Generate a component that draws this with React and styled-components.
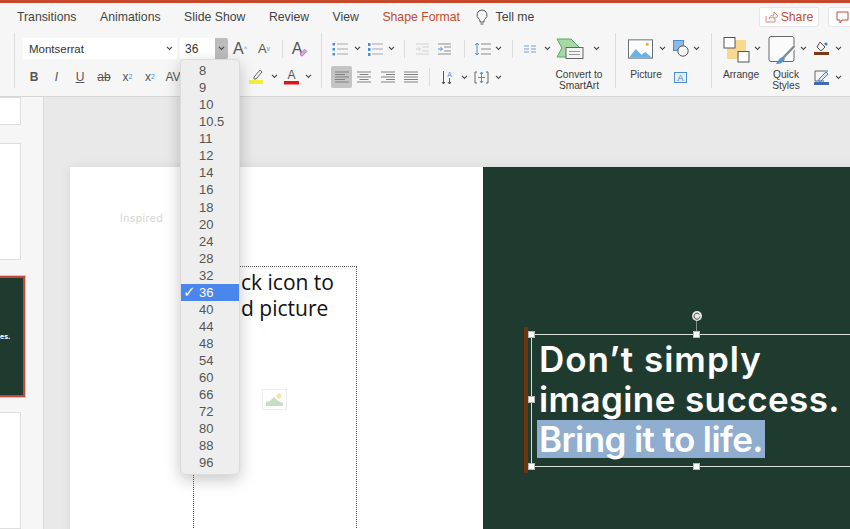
import styled, { createGlobalStyle } from "styled-components";

const GlobalStyle = createGlobalStyle`
	html, body {
		margin: 0;
		padding: 0;
		background: #f5f5f5;
		font-family: "Liberation Sans", Arial, sans-serif;
	}
`;

const Page = styled.div`
	position: relative;
	display: flex;
	flex-direction: column;
	width: 850px;
	height: 529px;
	overflow: hidden;
`;

const TopStripe = styled.div`
	flex: none;
	height: 3px;
	background: #c6492c;
`;

const TabBar = styled.div`
	flex: none;
	display: flex;
	align-items: center;
	gap: 23.5px;
	height: 30px;
	padding: 0 0 2px 17px;
	box-sizing: border-box;
	background: #f6f6f6;
`;

const Tab = styled.span`
	font-size: 12.25px;
	color: ${(p) => (p.$active ? "#c8492f" : "#444")};
	white-space: nowrap;
`;

const TellMe = styled.span`
	display: flex;
	align-items: center;
	gap: 8px;
	margin-left: -8px;
	font-size: 12.25px;
	color: #444;
`;

const TabActions = styled.div`
	display: flex;
	gap: 9px;
	margin-left: auto;
	margin-right: -6px;
`;

const ShareButton = styled.button`
	display: flex;
	align-items: center;
	justify-content: center;
	gap: 3px;
	width: 60px;
	height: 20px;
	padding: 0;
	border: 1px solid #e6e6e6;
	border-radius: 2px;
	background: #fff;
	font: 12.25px "Liberation Sans", Arial, sans-serif;
	color: #c8492f;
`;

const CommentButton = styled(ShareButton)`
	width: 28px;
`;

const Ribbon = styled.div`
	flex: none;
	display: flex;
	height: 64px;
	background: #f6f6f6;
	border-bottom: 1px solid #d6d6d6;
	box-sizing: border-box;
`;

const Group = styled.div`
	flex: none;
	display: flex;
	flex-direction: column;
	gap: 7px;
	width: ${(p) => p.$w}px;
	height: 55px;
	padding: 5px 0 0 ${(p) => p.$pad || 0}px;
	box-sizing: border-box;
	border-right: ${(p) => (p.$last ? "none" : "1px solid #dcdcdc")};
`;

const Row = styled.div`
	display: flex;
	align-items: center;
	height: ${(p) => p.$h || 21}px;
`;

const Slot = styled.div`
	flex: none;
	display: flex;
	align-items: center;
	justify-content: center;
	width: ${(p) => p.$w}px;
	height: 100%;
	background: ${(p) => (p.$active ? "#c4c4c4" : "transparent")};
	border-radius: 2px;
	color: #555;
	font-size: ${(p) => p.$size || 12}px;
`;

const Caret = styled.sup`
	font-size: 7px;
	color: ${(p) => p.$color || "#4a90d9"};
`;

const Rule = styled.div`
	width: 1px;
	height: 18px;
	background: #dcdcdc;
`;

const FontSelect = styled.div`
	flex: none;
	display: flex;
	align-items: center;
	justify-content: space-between;
	width: 154px;
	height: 100%;
	padding: 0 4px 0 6px;
	box-sizing: border-box;
	margin-right: 3px;
	background: #fff;
	font-size: 11.5px;
	color: #333;
`;

const SizeInput = styled.div`
	flex: none;
	display: flex;
	align-items: center;
	width: 35px;
	height: 100%;
	padding-left: 5px;
	box-sizing: border-box;
	background: #fff;
	font-size: 12px;
	color: #333;
`;

const SizeArrow = styled.div`
	flex: none;
	display: flex;
	align-items: center;
	justify-content: center;
	width: 13px;
	height: 100%;
	background: #bcbcbc;
	border-radius: 0 2px 2px 0;
`;

const Label = styled.div`
	flex: none;
	align-self: flex-start;
	width: ${(p) => p.$w}px;
	margin-top: 2.5px;
	font-size: 10.2px;
	line-height: 11px;
	text-align: center;
	color: #3c3c3c;
`;

const Workspace = styled.div`
	flex: 1;
	display: flex;
	min-height: 0;
`;

const ThumbPanel = styled.div`
	flex: none;
	display: flex;
	flex-direction: column;
	width: 44px;
	box-sizing: border-box;
	background: #f6f6f6;
	border-right: 1px solid #dcdcdc;
	overflow: hidden;
`;

const Thumb = styled.div`
	flex: none;
	width: 21px;
	height: ${(p) => p.$h}px;
	margin-bottom: 18px;
	background: #fff;
	border: 1px solid #dedede;
	border-left: none;
	box-sizing: border-box;
`;

const ActiveThumb = styled.div`
	flex: none;
	display: flex;
	align-items: center;
	width: 25px;
	height: 121px;
	margin-top: -2px;
	margin-bottom: 15px;
	box-sizing: border-box;
	background: #1f3b30;
	border: 2px solid #c1483a;
	border-left: none;
	outline: 1px solid #e3c1b8;
	font: 700 7px "Inter", sans-serif;
	color: #fff;
`;

const Canvas = styled.div`
	flex: 1;
	padding: 70px 0 0 26px;
	background: #e9e9e9;
	min-width: 0;
`;

const Slide = styled.div`
	display: flex;
	width: 900px;
	height: 500px;
	box-shadow: 0 0 10px rgba(0, 0, 0, 0.08);
`;

const SlideLeft = styled.div`
	position: relative;
	flex: none;
	width: 413px;
	background: #fff;
`;

const SlideRight = styled.div`
	position: relative;
	flex: 1;
	background: #1f3b30;
`;

const Brand = styled.div`
	position: absolute;
	left: 50px;
	top: 45px;
	font: 400 10.5px "Inter", sans-serif;
	letter-spacing: 0.4px;
	color: #d4d4d4;
`;

const Placeholder = styled.div`
	position: absolute;
	left: 123px;
	top: 99px;
	width: 164px;
	height: 400px;
	padding: 2px 0 0 47px;
	box-sizing: border-box;
	border: 1px dotted #555;
	font: 21px/26px "Open Sans", sans-serif;
	color: #111;
`;

const PictureHint = styled.div`
	position: absolute;
	left: 192px;
	top: 222px;
	display: flex;
	align-items: center;
	justify-content: center;
	width: 25px;
	height: 21px;
	box-sizing: border-box;
	border: 1px solid #ececec;
`;

const AccentBar = styled.div`
	position: absolute;
	left: 41px;
	top: 160px;
	width: 4px;
	height: 146px;
	background: #6f3510;
`;

const TextFrame = styled.div`
	position: absolute;
	left: 48px;
	top: 167px;
	width: 500px;
	height: 133px;
	padding: 4px 0 0 7px;
	box-sizing: border-box;
	border: 1.5px solid #d9dfdc;
	font: 600 35px/40px "Inter", sans-serif;
	color: #fff;
	white-space: nowrap;
`;

const Line = styled.div`
	letter-spacing: ${(p) => p.$ls}px;
`;

const Selected = styled.span`
	display: inline-block;
	margin: -1px 0 0 -2px;
	padding: 0 2px 0 2px;
	height: 38px;
	line-height: 38px;
	background: #8fadcf;
`;

const Handle = styled.div`
	position: absolute;
	left: ${(p) => p.$x}px;
	top: ${(p) => p.$y}px;
	width: 7px;
	height: 7px;
	background: #fff;
	border: 1px solid #bbb;
	box-sizing: border-box;
`;

const RotateStem = styled.div`
	position: absolute;
	left: 213px;
	top: 150px;
	width: 1px;
	height: 17px;
	background: #7f918a;
`;

const RotateHandle = styled.div`
	position: absolute;
	left: 209px;
	top: 144px;
	display: flex;
	align-items: center;
	justify-content: center;
	width: 10px;
	height: 10px;
	border-radius: 50%;
	background: #e8e8e8;
`;

const SizeMenu = styled.ul`
	position: absolute;
	left: 180px;
	top: 59px;
	width: 60px;
	height: 416px;
	margin: 0;
	padding: 2px 0 0;
	box-sizing: border-box;
	list-style: none;
	background: #eeeeee;
	border: 1px solid #dcdcdc;
	border-radius: 4px 4px 6px 6px;
	box-shadow: 0 5px 16px rgba(0, 0, 0, 0.22);
`;

const SizeItem = styled.li`
	position: relative;
	height: 17.07px;
	padding-left: 18px;
	font-size: 13px;
	line-height: 17px;
	color: ${(p) => (p.$selected ? "#fff" : "#555")};
	background: ${(p) => (p.$selected ? "#4a86ec" : "transparent")};
`;

const Check = styled.span`
	position: absolute;
	left: 2px;
	top: 0;
	font-size: 15px;
	font-family: "DejaVu Sans", sans-serif;
`;

const SIZES = [
	"8", "9", "10", "10.5", "11", "12", "14", "16", "18", "20", "24", "28",
	"32", "36", "40", "44", "48", "54", "60", "66", "72", "80", "88", "96",
];

function Chevron() {
	return (
		<svg width="7" height="5" viewBox="0 0 8 6">
			<polyline points="1,1 4,4 7,1" fill="none" stroke="#4a4a4a" strokeWidth="1.4" />
		</svg>
	);
}

function ListLines({ dots, color = "#a8a8a8" }) {
	return (
		<svg width="16" height="14" viewBox="0 0 16 14">
			{[2, 7, 12].map((y) => (
				<g key={y}>
					<rect x={dots === "num" ? 1 : 0.5} y={y - 1} width="2.5" height={dots === "num" ? 3 : 2.5} fill="#4a90d9" />
					<line x1="5" y1={y} x2="16" y2={y} stroke={color} strokeWidth="1" />
				</g>
			))}
		</svg>
	);
}

function IndentIcon({ active }) {
	return (
		<svg width="15" height="12" viewBox="0 0 15 12">
			{[1, 4, 8, 11].map((y) => (
				<line key={y} x1={y === 4 || y === 8 ? 7 : 1} y1={y} x2="14" y2={y} stroke={active ? "#8f8f8f" : "#d0d0d0"} />
			))}
			<path d="M1 6h4M3.5 4l2 2-2 2" fill="none" stroke={active ? "#4a90d9" : "#d0d0d0"} />
		</svg>
	);
}

function LineSpacing() {
	return (
		<svg width="17" height="14" viewBox="0 0 17 14">
			<path d="M3 1v12M1 3l2-2 2 2M1 11l2 2 2-2" fill="none" stroke="#4a90d9" />
			{[2, 7, 12].map((y) => (
				<line key={y} x1="7" y1={y} x2="17" y2={y} stroke="#8a8a8a" />
			))}
		</svg>
	);
}

function AlignIcon({ mode }) {
	const rows = [
		[0, 14], [mode === "left" ? 0 : 2.5, mode === "left" ? 10 : 11.5], [0, 14],
		[mode === "left" ? 0 : 2.5, mode === "left" ? 10 : 11.5], [0, 14],
	];
	return (
		<svg width="14" height="12" viewBox="0 0 14 12">
			{rows.map(([a, b], i) => {
				const shift = mode === "right" && a ? 2.5 : 0;
				const end = mode === "justify" ? 14 : b + shift;
				const start = mode === "justify" ? 0 : a + shift;
				return <line key={i} x1={start} x2={end} y1={1 + i * 2.5} y2={1 + i * 2.5} stroke="#808080" />;
			})}
		</svg>
	);
}

function ColumnsIcon() {
	return (
		<svg width="12" height="8" viewBox="0 0 12 8">
			{[1, 4, 7].map((y) => (
				<g key={y} stroke="#6aa5dc">
					<line x1="0" x2="5" y1={y} y2={y} />
					<line x1="7" x2="12" y1={y} y2={y} />
				</g>
			))}
		</svg>
	);
}

function SmartArtIcon() {
	return (
		<svg width="28" height="21" viewBox="0 0 28 21">
			<path d="M1 1h14l9 9-9 9H1l5-9z" fill="#a9d8a6" stroke="#4fa86b" />
			<rect x="10" y="9.500" width="17" height="11" fill="#f4f4f4" stroke="#666" />
			<path d="M13 13.500h11M13 16.500h11" stroke="#999" />
		</svg>
	);
}

function PictureIcon() {
	return (
		<svg width="26" height="20" viewBox="0 0 26 20">
			<rect x="0.5" y="0.5" width="25" height="19" fill="#fff" stroke="#5f6a75" />
			<path d="M1 19l7-9 6 6 4-3 7 6z" fill="#6db0e6" />
			<circle cx="20" cy="5" r="1.6" fill="#f0a040" />
		</svg>
	);
}

function ShapesIcon() {
	return (
		<svg width="16" height="17" viewBox="0 0 16 17">
			<rect x="0.5" y="0.5" width="10" height="10" fill="#8db9e4" stroke="#4a90d9" />
			<circle cx="10" cy="11" r="5.2" fill="#f6f6f6" stroke="#555" />
		</svg>
	);
}

function TextBoxIcon() {
	return (
		<svg width="15" height="13" viewBox="0 0 15 13">
			<rect x="1.5" y="1.5" width="12" height="10" fill="#e6eff8" stroke="#4a90d9" />
			<text x="7.500" y="10" textAnchor="middle" fontSize="9" fontFamily="Liberation Sans" fill="#3b7fc4">A</text>
		</svg>
	);
}

function ArrangeIcon() {
	return (
		<svg width="28" height="32" viewBox="0 0 28 32">
			<rect x="4" y="7" width="19" height="19" fill="#f8d990" />
			<rect x="1" y="4.500" width="11" height="10.500" fill="#fff" stroke="#555" />
			<rect x="15" y="18.500" width="11" height="10.500" fill="#fff" stroke="#555" />
		</svg>
	);
}

function QuickStylesIcon() {
	return (
		<svg width="28" height="32" viewBox="0 0 28 32">
			<rect x="1" y="3.500" width="25" height="25" rx="2" fill="#fbfbfb" stroke="#666" />
			<path d="M26.500 13L15 25" stroke="#fbfbfb" strokeWidth="5" />
			<path d="M26.500 13L15 25" stroke="#8a8a8a" strokeWidth="2.500" />
			<path d="M15 24c-3 0-4 3-7 7 4 0 7-1 9-5z" fill="#4f94d4" />
		</svg>
	);
}

function FillIcon() {
	return (
		<svg width="15" height="17" viewBox="0 0 15 17">
			<path d="M6 2l5 5-4 4-4-4z" fill="#f4f4f4" stroke="#555" />
			<circle cx="12" cy="4" r="1.600" fill="#3b7fc4" />
			<rect x="0" y="12" width="15" height="3" fill="#7a3a12" />
		</svg>
	);
}

function LineColorIcon() {
	return (
		<svg width="15" height="15" viewBox="0 0 15 15">
			<path d="M14 1H1v10h9" fill="none" stroke="#666" />
			<path d="M5 9l7-7 2 2-7 7H5z" fill="#dcebf8" stroke="#3b7fc4" />
			<rect x="0" y="12" width="15" height="3" fill="#3f68b5" />
		</svg>
	);
}

function App() {
	return (
		<Page>
			<GlobalStyle />
			<TopStripe />
			<TabBar>
				<Tab>Transitions</Tab>
				<Tab>Animations</Tab>
				<Tab>Slide Show</Tab>
				<Tab>Review</Tab>
				<Tab>View</Tab>
				<Tab $active>Shape Format</Tab>
				<TellMe>
					<svg width="12" height="17" viewBox="0 0 12 17">
						<path d="M6 1a5 5 0 0 0-3 9c.7.7 1 1.500 1 3h4c0-1.500.3-2.300 1-3a5 5 0 0 0-3-9zM4.500 15h3" fill="none" stroke="#555" />
					</svg>
					Tell me
				</TellMe>
				<TabActions>
					<ShareButton>
						<svg width="13" height="12" viewBox="0 0 13 12">
							<path d="M1 5v6h9V8M4 8c0-3 3-4 5-4V1l4 4-4 3V6C7 6 5 6.500 4 8z" fill="none" stroke="#d98a76" />
						</svg>
						Share
					</ShareButton>
					<CommentButton>
						<svg width="13" height="13" viewBox="0 0 13 13">
							<path d="M1 1h11v8H6l-2 3V9H1z" fill="none" stroke="#c8492f" />
						</svg>
					</CommentButton>
				</TabActions>
			</TabBar>
			<Ribbon>
				<Group $w={15} />
				<Group $w={307} $pad={8}>
					<Row>
						<FontSelect>
							Montserrat
							<Chevron />
						</FontSelect>
						<SizeInput>36</SizeInput>
						<SizeArrow>
							<Chevron />
						</SizeArrow>
						<Slot $w={24} $size={16}>A<Caret>^</Caret></Slot>
						<Slot $w={24} $size={13}>A<Caret>v</Caret></Slot>
						<Slot $w={12}><Rule /></Slot>
						<Slot $w={24} $size={16}>
							A
							<svg width="9" height="9" viewBox="0 0 8 8" style={{ marginLeft: -3, marginTop: 8 }}>
								<path d="M1 5l4-4 2 2-4 4H2z" fill="#d9a6e6" stroke="#a860c0" strokeWidth="0.7" />
							</svg>
						</Slot>
					</Row>
					<Row>
						<Slot $w={22}><b>B</b></Slot>
						<Slot $w={23}><i>I</i></Slot>
						<Slot $w={24}><u>U</u></Slot>
						<Slot $w={24}><s>ab</s></Slot>
						<Slot $w={23}>x<Caret>2</Caret></Slot>
						<Slot $w={22}>x<sub style={{ fontSize: 7, color: "#4a90d9" }}>2</sub></Slot>
						<Slot $w={24}>AV</Slot>
						<Slot $w={60} />
						<Slot $w={24}>
							<svg width="16" height="15" viewBox="0 0 16 15">
								<path d="M5 8l6-7 2 2-6 7H5z" fill="none" stroke="#666" />
								<rect x="0" y="11" width="14" height="4" fill="#f5ee3a" />
							</svg>
						</Slot>
						<Slot $w={10}><Chevron /></Slot>
						<Slot $w={24}>
							<svg width="15" height="16" viewBox="0 0 15 16">
								<text x="7.500" y="10" textAnchor="middle" fontSize="12" fontFamily="Liberation Sans" fill="#555">A</text>
								<rect x="0" y="12" width="15" height="3.500" fill="#e0121c" />
							</svg>
						</Slot>
						<Slot $w={10}><Chevron /></Slot>
					</Row>
				</Group>
				<Group $w={294} $pad={9}>
					<Row>
						<Slot $w={18}><ListLines /></Slot>
						<Slot $w={16}><Chevron /></Slot>
						<Slot $w={20}><ListLines dots="num" /></Slot>
						<Slot $w={12}><Chevron /></Slot>
						<Slot $w={14}><Rule /></Slot>
						<Slot $w={22}><IndentIcon /></Slot>
						<Slot $w={23}><IndentIcon active /></Slot>
						<Slot $w={17}><Rule /></Slot>
						<Slot $w={18}><LineSpacing /></Slot>
						<Slot $w={15}><Chevron /></Slot>
						<Slot $w={12}><Rule /></Slot>
						<Slot $w={24}><ColumnsIcon /></Slot>
						<Slot $w={10}><Chevron /></Slot>
						<Slot $w={36}><SmartArtIcon /></Slot>
						<Slot $w={16}><Chevron /></Slot>
					</Row>
					<Row $h={22}>
						<Slot $w={21} $active><AlignIcon mode="left" /></Slot>
						<Slot $w={24}><AlignIcon mode="center" /></Slot>
						<Slot $w={23}><AlignIcon mode="right" /></Slot>
						<Slot $w={24}><AlignIcon mode="justify" /></Slot>
						<Slot $w={12}><Rule /></Slot>
						<Slot $w={23}>
							<svg width="12" height="15" viewBox="0 0 12 15">
								<path d="M2.500 1v13M1 12l1.500 2L4 12" fill="none" stroke="#555" />
								<text x="8.500" y="7" textAnchor="middle" fontSize="7" fontFamily="Liberation Sans" fill="#4a90d9">A</text>
								<path d="M8.500 8v6M7 12l1.500 2 1.500-2" fill="none" stroke="#555" />
							</svg>
						</Slot>
						<Slot $w={12}><Chevron /></Slot>
						<Slot $w={22}>
							<svg width="15" height="13" viewBox="0 0 15 13">
								<path d="M3 1H1v11h2M12 1h2v11h-2" fill="none" stroke="#666" />
								<path d="M7.500 1v11M6 3l1.500-2L9 3M6 10l1.500 2L9 10M4 6.500h7" fill="none" stroke="#4a90d9" />
							</svg>
						</Slot>
						<Slot $w={13}><Chevron /></Slot>
						<Slot $w={39} />
						<Label $w={70}>Convert to SmartArt</Label>
					</Row>
				</Group>
				<Group $w={96} $pad={12}>
					<Row>
						<Slot $w={25}><PictureIcon /></Slot>
						<Slot $w={18}><Chevron /></Slot>
						<Slot $w={20}><ShapesIcon /></Slot>
						<Slot $w={11}><Chevron /></Slot>
					</Row>
					<Row $h={22}>
						<Label $w={36}>Picture</Label>
						<Slot $w={4} />
						<Slot $w={24}><TextBoxIcon /></Slot>
					</Row>
				</Group>
				<Group $w={138} $pad={10} $last>
					<Row>
						<Slot $w={30}><ArrangeIcon /></Slot>
						<Slot $w={10}><Chevron /></Slot>
						<Slot $w={6} />
						<Slot $w={28}><QuickStylesIcon /></Slot>
						<Slot $w={14}><Chevron /></Slot>
						<Slot $w={3} />
						<Slot $w={16}><FillIcon /></Slot>
						<Slot $w={18}><Chevron /></Slot>
					</Row>
					<Row $h={22}>
						<Label $w={38}>Arrange</Label>
						<Slot $w={5} />
						<Label $w={42}>Quick Styles</Label>
						<Slot $w={6} />
						<Slot $w={16}><LineColorIcon /></Slot>
						<Slot $w={18}><Chevron /></Slot>
					</Row>
				</Group>
			</Ribbon>
			<Workspace>
				<ThumbPanel>
					<Thumb $h={28} />
					<Thumb $h={117} />
					<ActiveThumb>es.</ActiveThumb>
					<Thumb $h={117} />
				</ThumbPanel>
				<Canvas>
					<Slide>
						<SlideLeft>
							<Brand>Inspired</Brand>
							<Placeholder>
								ck icon to
								<br />
								d picture
							</Placeholder>
							<PictureHint>
								<svg width="19" height="15" viewBox="0 0 19 15">
									<path d="M1 14V10l4-1 4-4 4 4 5 2v3z" fill="#c5dfc2" />
									<circle cx="14" cy="4" r="2.500" fill="#f6e2a0" />
								</svg>
							</PictureHint>
						</SlideLeft>
						<SlideRight>
							<AccentBar />
							<RotateStem />
							<RotateHandle>
								<svg width="8" height="8" viewBox="0 0 8 8">
									<path d="M6.500 2.500A3 3 0 1 0 7 4.500" fill="none" stroke="#444" />
								</svg>
							</RotateHandle>
							<TextFrame>
								<Line $ls={1}>Don’t simply</Line>
								<Line $ls={0.4}>imagine success.</Line>
								<Line $ls={-0.6}>
									<Selected>Bring it to life.</Selected>
								</Line>
							</TextFrame>
							<Handle $x={45} $y={164} />
							<Handle $x={210} $y={164} />
							<Handle $x={45} $y={229} />
							<Handle $x={45} $y={296} />
							<Handle $x={210} $y={296} />
						</SlideRight>
					</Slide>
				</Canvas>
			</Workspace>
			<SizeMenu>
				{SIZES.map((size) => (
					<SizeItem key={size} $selected={size === "36"}>
						{size === "36" && <Check>✓</Check>}
						{size}
					</SizeItem>
				))}
			</SizeMenu>
		</Page>
	);
}

export default App;
